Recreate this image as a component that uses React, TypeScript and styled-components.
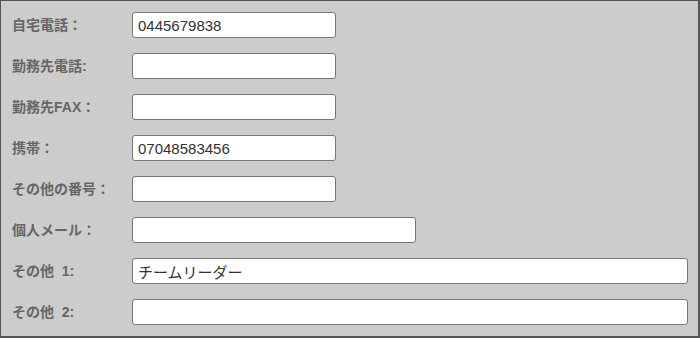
import React from "react";
import styled, { createGlobalStyle } from "styled-components";

const Global = createGlobalStyle`
  html, body { margin: 0; padding: 0; background: #cccccc; }
  * { box-sizing: border-box; }
`;

const Panel = styled.div`
  width: 700px;
  height: 338px;
  background: #cccccc;
  border-top: 1px solid #555;
  border-left: 1px solid #555;
  border-right: 2px solid #555;
  border-bottom: 2px solid #555;
  padding: 11px 10px 0 11px;
`;

const Form = styled.div`
  display: grid;
  grid-template-columns: 120px 1fr;
  row-gap: 15px;
  align-items: center;
`;

const Label = styled.label`
  font-family: "Liberation Sans", "Noto Sans CJK JP", sans-serif;
  font-weight: bold;
  font-size: 14px;
  color: #666;
  line-height: 26px;
  white-space: pre;
`;

const Field = styled.input<{ $w: number }>`
  width: ${(p) => p.$w}px;
  height: 26px;
  border: 1px solid #777;
  border-radius: 3px;
  background: #fff;
  padding: 0 5px;
  font-family: "Liberation Sans", "Noto Sans CJK JP", sans-serif;
  font-size: 15px;
  color: #333;
  outline: none;
`;

const rows: { label: string; value: string; w: number }[] = [
  { label: "自宅電話：", value: "0445679838", w: 204 },
  { label: "勤務先電話:", value: "", w: 204 },
  { label: "勤務先FAX：", value: "", w: 204 },
  { label: "携帯：", value: "07048583456", w: 204 },
  { label: "その他の番号：", value: "", w: 204 },
  { label: "個人メール：", value: "", w: 284 },
  { label: "その他  1:", value: "チームリーダー", w: 556 },
  { label: "その他  2:", value: "", w: 556 },
];

export default function App() {
  return (
    <>
      <Global />
      <Panel>
        <Form>
          {rows.map((r, i) => (
            <React.Fragment key={i}>
              <Label>{r.label}</Label>
              <Field $w={r.w} defaultValue={r.value} />
            </React.Fragment>
          ))}
        </Form>
      </Panel>
    </>
  );
}
